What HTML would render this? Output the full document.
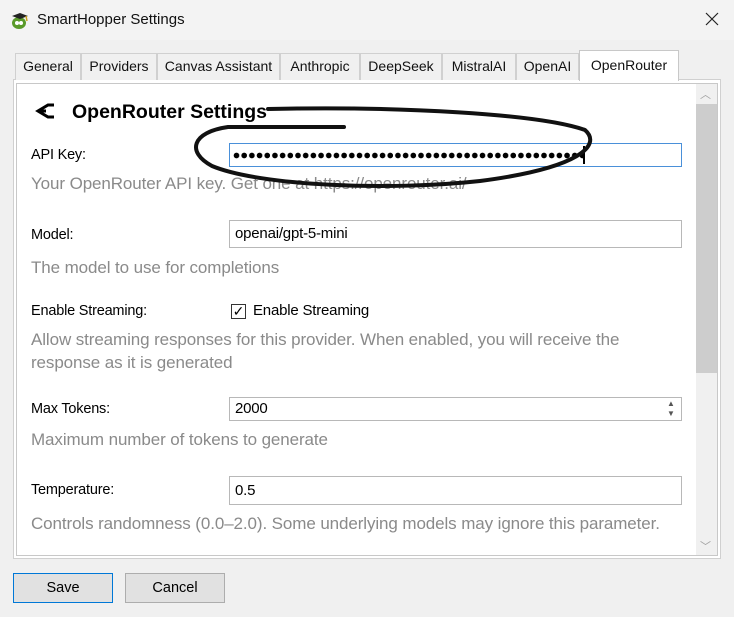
<!DOCTYPE html>
<html><head><style>
*{margin:0;padding:0;box-sizing:border-box}
body{width:734px;height:617px;background:#f0f0f0;font-family:"Liberation Sans",sans-serif;position:relative;overflow:hidden}
.a{position:absolute}
.tab{position:absolute;top:53px;height:27px;border:1px solid #d0d0d0;border-bottom:none;background:#f0f0f0;font-size:14px;line-height:25px;text-align:center;color:#111}
.lbl{position:absolute;left:31px;font-size:14.5px;color:#000;letter-spacing:-0.2px}
.desc{position:absolute;left:31px;font-size:17px;color:#8a8a8a;letter-spacing:-0.1px}
.inp{position:absolute;left:229px;width:453px;height:24px;border:1px solid #b8b8b8;background:#fff;font-size:15px;line-height:22px;padding-left:5px;letter-spacing:-0.2px}
.btn{position:absolute;top:573px;height:30px;width:100px;border:1px solid #adadad;background:#e1e1e1;font-size:14.5px;text-align:center;line-height:28px}
</style></head><body>
<div class="a" style="left:0;top:0;width:734px;height:40px;background:#f3f3f3"></div>
<svg class="a" style="left:10px;top:10px" width="20" height="20" viewBox="0 0 20 20"><ellipse cx="9" cy="13" rx="7" ry="6" fill="#5a9a2a"/><circle cx="7" cy="13" r="2" fill="#fff"/><circle cx="11" cy="13" r="2" fill="#fff"/><path d="M2 6 L10 3 L18 6 L10 9Z" fill="#222"/><path d="M16 6 L17 11" stroke="#c9a020" stroke-width="1.5"/></svg>
<div class="a" style="left:37px;top:11px;font-size:15px;color:#111">SmartHopper Settings</div>
<svg class="a" style="left:705px;top:12px" width="14" height="14"><path d="M1 1L13 13M13 1L1 13" stroke="#222" stroke-width="1.2"/></svg>

<div class="a" style="left:13px;top:79px;width:708px;height:480px;border:1px solid #d0d0d0;background:#fff"></div>
<div class="a" style="left:16px;top:83px;width:702px;height:473px;border:1px solid #c8c8c8"></div>
<div class="tab" style="left:15px;width:66px">General</div>
<div class="tab" style="left:81px;width:76px">Providers</div>
<div class="tab" style="left:157px;width:123px">Canvas Assistant</div>
<div class="tab" style="left:280px;width:80px">Anthropic</div>
<div class="tab" style="left:360px;width:82px">DeepSeek</div>
<div class="tab" style="left:442px;width:74px">MistralAI</div>
<div class="tab" style="left:516px;width:63px">OpenAI</div>
<div class="tab" style="left:579px;top:50px;height:31px;width:100px;background:#fff;border-color:#c8c8c8;line-height:28px">OpenRouter</div>

<div class="a" style="left:696px;top:84px;width:21px;height:471px;background:#f0f0f0"></div>
<div class="a" style="left:696px;top:104px;width:21px;height:269px;background:#cdcdcd"></div>
<div class="a" style="left:700px;top:86px;font-size:11px;color:#a0a0a0">︿</div>
<div class="a" style="left:700px;top:538px;font-size:11px;color:#a0a0a0">﹀</div>

<svg class="a" style="left:34px;top:103px" width="22" height="16" viewBox="0 0 22 16"><path d="M20 2 L14 2 L4 8 L14 14 L20 14 M4 8 L12 8" stroke="#000" stroke-width="3" fill="none"/></svg>
<div class="a" style="left:72px;top:101px;font-size:19.5px;font-weight:bold;color:#000">OpenRouter Settings</div>

<div class="lbl" style="top:147px">API Key:</div>
<div class="inp" style="top:143px;border-color:#4a90d9"></div>
<div class="a" style="left:233px;top:152px;width:350px;height:7px;background:radial-gradient(circle at 3.5px 3.5px,#000 2.6px,transparent 3px);background-size:7.7px 7px"></div>
<div class="a" style="left:583px;top:146px;width:2px;height:18px;background:#000"></div>
<div class="desc" style="top:174px">Your OpenRouter API key. Get one at https://openrouter.ai/</div>

<div class="lbl" style="top:227px">Model:</div>
<div class="inp" style="top:220px;height:28px;line-height:26px">openai/gpt-5-mini</div>
<div class="desc" style="top:258px">The model to use for completions</div>

<div class="lbl" style="top:303px">Enable Streaming:</div>
<div class="a" style="left:231px;top:304px;width:15px;height:15px;border:1px solid #333;background:#fff;font-size:14px;line-height:13px;text-align:center">✓</div>
<div class="a" style="left:253px;top:302px;font-size:15px;letter-spacing:-0.2px">Enable Streaming</div>
<div class="desc" style="top:330px">Allow streaming responses for this provider. When enabled, you will receive the</div>
<div class="desc" style="top:353px">response as it is generated</div>

<div class="lbl" style="top:401px">Max Tokens:</div>
<div class="inp" style="top:397px">2000</div>
<div class="a" style="left:667px;top:399px;font-size:8px;color:#555;line-height:10px">▲<br>▼</div>
<div class="desc" style="top:430px">Maximum number of tokens to generate</div>

<div class="lbl" style="top:482px">Temperature:</div>
<div class="inp" style="top:476px;height:29px;line-height:27px">0.5</div>
<div class="desc" style="top:514px">Controls randomness (0.0–2.0). Some underlying models may ignore this parameter.</div>

<svg class="a" style="left:0;top:0" width="734" height="617"><path d="M268,109 C400,106 540,114 585,130 C602,145 580,168 480,181 C390,191 260,186 212,166 C186,152 192,132 228,127 L344,127" stroke="#111" stroke-width="4" fill="none" stroke-linecap="round"/></svg>

<div class="btn" style="left:13px;border-color:#0078d7">Save</div>
<div class="btn" style="left:125px">Cancel</div>
</body></html>
